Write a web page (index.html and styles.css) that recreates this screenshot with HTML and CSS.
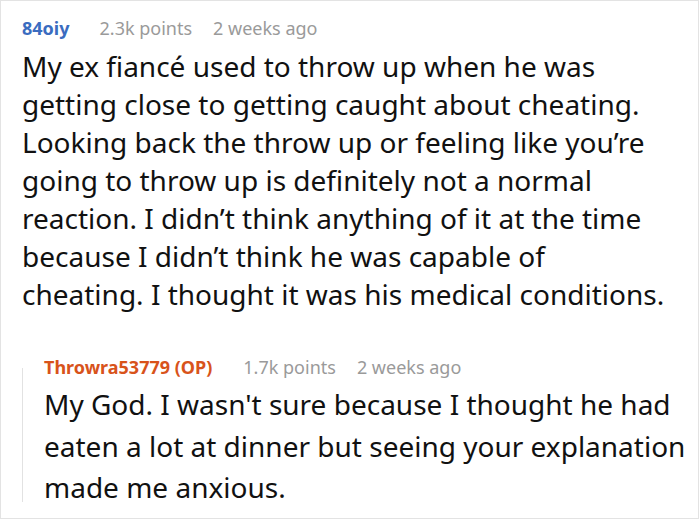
FILE: index.html
```html
<!DOCTYPE html>
<html lang="en">
<head>
<meta charset="utf-8">
<title>Comment</title>
<link rel="stylesheet" href="styles.css">
</head>
<body>
<div class="card">
  <div class="comment">
    <div class="meta">
      <span class="user">84oiy</span>
      <span class="points">2.3k points</span>
      <span class="time">2 weeks ago</span>
    </div>
    <p class="text main-text">My ex fiancé used to throw up when he was getting close to getting caught about cheating. Looking back the throw up or feeling like you’re going to throw up is definitely not a normal reaction. I didn’t think anything of it at the time because I didn’t think he was capable of cheating. I thought it was his medical conditions.</p>
  </div>
  <div class="reply">
    <div class="thread-line"></div>
    <div class="reply-body">
      <div class="meta">
        <span class="user op">Throwra53779 (OP)</span>
        <span class="points">1.7k points</span>
        <span class="time">2 weeks ago</span>
      </div>
      <p class="text reply-text">My God. I wasn't sure because I thought he had eaten a lot at dinner but seeing your explanation made me anxious.</p>
    </div>
  </div>
</div>
</body>
</html>
```

FILE: styles.css
```css
html, body {
  margin: 0;
  padding: 0;
  background: #ffffff;
}

body {
  font-family: "Noto Sans", "Open Sans", sans-serif;
  color: #111111;
}

.card {
  box-sizing: border-box;
  width: 699px;
  height: 519px;
  border: 1px solid #e3e3e3;
  padding: 15px 0 0 21px;
  overflow: hidden;
}

.meta {
  display: flex;
  align-items: baseline;
  font-size: 18px;
  line-height: 24px;
  white-space: nowrap;
}

.user {
  font-weight: 700;
  color: #3a6cc0;
  margin-right: 30px;
}

.user.op {
  color: #d8531b;
  margin-right: 31px;
}

.points {
  color: #9a9a9a;
  margin-right: 21px;
}

.time {
  color: #9a9a9a;
}

.text {
  margin: 7px 0 0 0;
  font-size: 28px;
  line-height: 38px;
  color: #111111;
}

.main-text {
  max-width: 644px;
}

.reply {
  display: flex;
  margin-top: 42px;
}

.thread-line {
  width: 1px;
  flex: none;
  background: #e2e2e2;
  margin: 13px 21px 7px 0;
}

.reply-body {
  flex: 1;
}

.reply-text {
  margin-top: 5px;
  line-height: 41.5px;
}
```
